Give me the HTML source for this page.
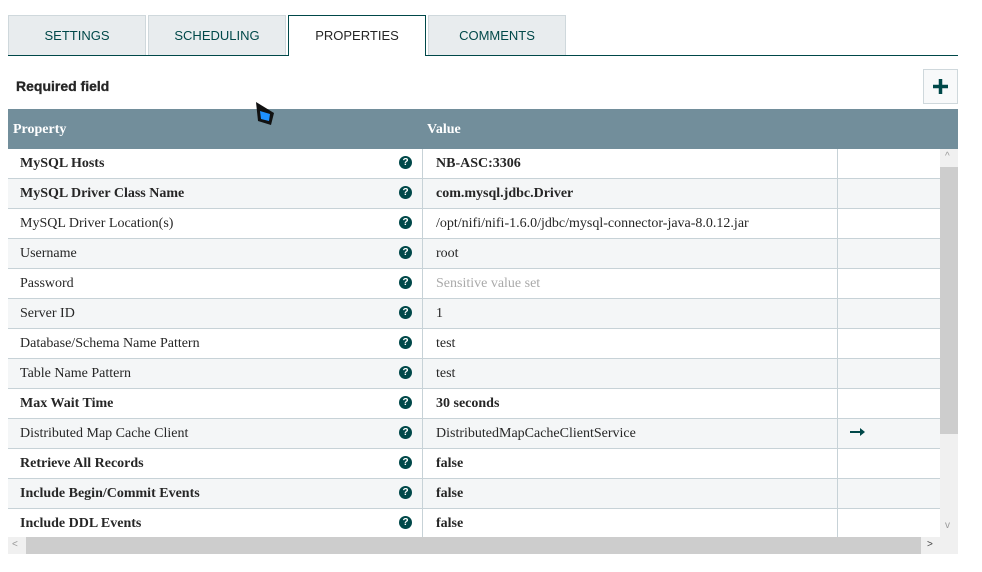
<!DOCTYPE html>
<html><head><meta charset="utf-8"><style>
*{margin:0;padding:0;box-sizing:border-box}
body{width:982px;height:572px;background:#fff;position:relative;overflow:hidden;font-family:"Liberation Serif",serif}
.tab{position:absolute;top:15px;height:40px;background:#e8ecee;border:1px solid #cfd8dc;border-bottom:none;font-family:"Liberation Sans",sans-serif;font-size:13px;color:#004849;text-align:center;line-height:39px}
.tab.act{background:#fff;border:1px solid #004849;border-bottom:none;color:#262626;height:41px}
.line{position:absolute;left:8px;top:55px;width:950px;height:1px;background:#004849}
.req{position:absolute;left:16px;top:78px;font-family:"Liberation Sans",sans-serif;font-size:14px;font-weight:600;color:#262626;-webkit-text-stroke:0.3px #262626}
.plus{position:absolute;left:923px;top:69px;width:35px;height:35px;border:1px solid #cfd8dc;background:#f8f9fa}
.hdr{position:absolute;left:8px;top:109px;width:950px;height:40px;background:#728e9b;color:#fff;font-weight:bold;font-size:14px}
.hdr span{position:absolute;top:13px}
.rows{position:absolute;left:8px;top:149px;width:932px;height:388px;overflow:hidden}
.r{height:30px;border-bottom:1px solid #c7d2d7;position:relative;font-size:14px;color:#262626}
.r:nth-child(even){background:#f4f6f7}
.r .n{position:absolute;left:12px;top:7px}
.r .v{position:absolute;left:428px;top:7px}
.r .q{position:absolute;left:391px;top:7px;width:13px;height:13px;border-radius:50%;background:#004849;color:#fff;font:bold 10px/13px "Liberation Sans",sans-serif;text-align:center}
.r .s1{position:absolute;left:414px;top:0;width:1px;height:30px;background:#c7d2d7}
.r .s2{position:absolute;left:829px;top:0;width:1px;height:30px;background:#c7d2d7}
.b{font-weight:bold}
.vs{position:absolute;left:940px;top:149px;width:18px;height:388px;background:#f0f0f0}
.vt{position:absolute;left:940px;top:167px;width:18px;height:267px;background:#cdcdcd}
.hs{position:absolute;left:8px;top:537px;width:950px;height:17px;background:#f0f0f0}
.ht{position:absolute;left:26px;top:537px;width:895px;height:17px;background:#cdcdcd}
.ar{position:absolute;font:10px "Liberation Sans",sans-serif;color:#999}
</style></head><body>
<div class="tab" style="left:8px;width:138px">SETTINGS</div>
<div class="tab" style="left:148px;width:138px">SCHEDULING</div>
<div class="line"></div>
<div class="tab act" style="left:288px;width:138px">PROPERTIES</div>
<div class="tab" style="left:428px;width:138px">COMMENTS</div>
<div class="req">Required field</div>
<div class="plus"><svg width="33" height="33" viewBox="0 0 33 33"><path d="M16.5 9v15M9 16.5h15" stroke="#004849" stroke-width="3.5"/></svg></div>
<div class="hdr"><span style="left:5px">Property</span><span style="left:419px">Value</span></div>
<svg style="position:absolute;left:254px;top:101px" width="22" height="26" viewBox="0 0 22 26"><path d="M2 1L20 12L17 24L4 20Z" fill="#111"/><path d="M6 10L16 13L15 20L7 18Z" fill="#1e90ff"/></svg>
<div class="rows">
<div class="r b"><span class="n">MySQL Hosts</span><span class="q">?</span><span class="s1"></span><span class="v">NB-ASC:3306</span><span class="s2"></span></div>
<div class="r b"><span class="n">MySQL Driver Class Name</span><span class="q">?</span><span class="s1"></span><span class="v">com.mysql.jdbc.Driver</span><span class="s2"></span></div>
<div class="r"><span class="n">MySQL Driver Location(s)</span><span class="q">?</span><span class="s1"></span><span class="v">/opt/nifi/nifi-1.6.0/jdbc/mysql-connector-java-8.0.12.jar</span><span class="s2"></span></div>
<div class="r"><span class="n">Username</span><span class="q">?</span><span class="s1"></span><span class="v">root</span><span class="s2"></span></div>
<div class="r"><span class="n">Password</span><span class="q">?</span><span class="s1"></span><span class="v" style="color:#aaa">Sensitive value set</span><span class="s2"></span></div>
<div class="r"><span class="n">Server ID</span><span class="q">?</span><span class="s1"></span><span class="v">1</span><span class="s2"></span></div>
<div class="r"><span class="n">Database/Schema Name Pattern</span><span class="q">?</span><span class="s1"></span><span class="v">test</span><span class="s2"></span></div>
<div class="r"><span class="n">Table Name Pattern</span><span class="q">?</span><span class="s1"></span><span class="v">test</span><span class="s2"></span></div>
<div class="r b"><span class="n">Max Wait Time</span><span class="q">?</span><span class="s1"></span><span class="v">30 seconds</span><span class="s2"></span></div>
<div class="r"><span class="n">Distributed Map Cache Client</span><span class="q">?</span><span class="s1"></span><span class="v">DistributedMapCacheClientService</span><span class="s2"></span><svg style="position:absolute;left:842px;top:8px" width="16" height="10" viewBox="0 0 16 10"><path d="M0 5H12" stroke="#004849" stroke-width="2"/><path d="M10 1L15 5L10 9Z" fill="#004849"/></svg></div>
<div class="r b"><span class="n">Retrieve All Records</span><span class="q">?</span><span class="s1"></span><span class="v">false</span><span class="s2"></span></div>
<div class="r b"><span class="n">Include Begin/Commit Events</span><span class="q">?</span><span class="s1"></span><span class="v">false</span><span class="s2"></span></div>
<div class="r b"><span class="n">Include DDL Events</span><span class="q">?</span><span class="s1"></span><span class="v">false</span><span class="s2"></span></div>
</div>
<div class="vs"></div><div class="vt"></div>
<div class="hs"></div><div class="ht"></div>
<div class="ar" style="left:945px;top:151px">^</div>
<div class="ar" style="left:945px;top:520px">v</div>
<div class="ar" style="left:12px;top:539px">&lt;</div>
<div class="ar" style="left:927px;top:539px;color:#444">&gt;</div>
</body></html>
